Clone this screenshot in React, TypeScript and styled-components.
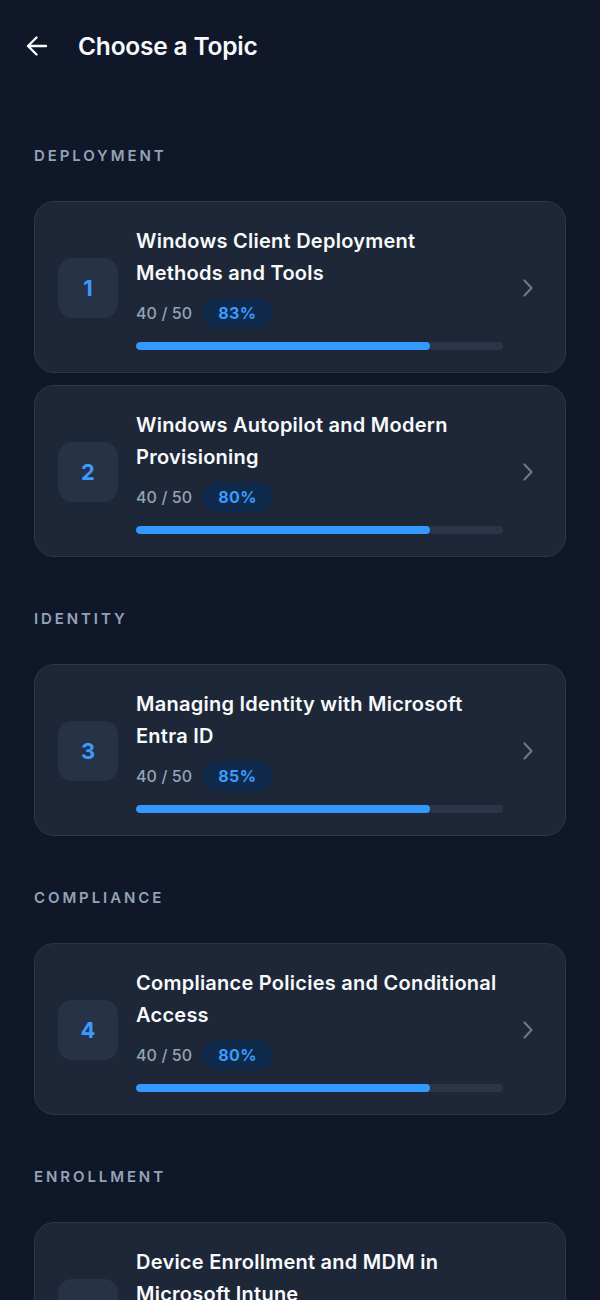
import React from "react";
import styled, { createGlobalStyle } from "styled-components";

const Global = createGlobalStyle`
  html, body { margin: 0; padding: 0; background: #0f1729; }
  body { font-family: Inter, "Noto Sans", sans-serif; -webkit-font-smoothing: antialiased; }
`;

const Page = styled.div`
  min-height: 1300px;
  background: #0f1729;
  color: #f1f5f9;
  padding: 0 34px 40px;
  box-sizing: border-box;
`;

const Header = styled.header`
  display: flex;
  align-items: center;
  gap: 28px;
  height: 48px;
  padding-top: 22px;
  margin-left: -10px;
`;

const BackButton = styled.button`
  display: flex;
  align-items: center;
  justify-content: center;
  width: 26px;
  height: 26px;
  padding: 0;
  border: none;
  background: transparent;
  color: #f8fafc;
  cursor: pointer;
`;

const Title = styled.h1`
  margin: 0;
  font-size: 24.5px;
  font-weight: 600;
  color: #f8fafc;
  letter-spacing: -0.2px;
`;

const Section = styled.section`
  display: flex;
  flex-direction: column;
  margin-top: ${(p: { $first?: boolean }) => (p.$first ? "76px" : "52px")};
`;

const SectionLabel = styled.div`
  font-size: 15px;
  line-height: 20px;
  font-weight: 600;
  letter-spacing: 2.9px;
  color: #94a3b8;
  margin-bottom: 35px;
`;

const CardList = styled.div`
  display: flex;
  flex-direction: column;
  gap: 12px;
`;

const Card = styled.div`
  display: flex;
  align-items: center;
  gap: 18px;
  padding: 23px 30px 22px 23px;
  background: #1d2738;
  border: 1px solid #2c3748;
  border-radius: 20px;
`;

const NumberBox = styled.div`
  flex: none;
  width: 60px;
  height: 60px;
  border-radius: 14px;
  background: #263246;
  display: flex;
  align-items: center;
  justify-content: center;
  color: #3b9bff;
  font-size: 22px;
  font-weight: 700;
`;

const Body = styled.div`
  flex: 1;
  min-width: 0;
  display: flex;
  flex-direction: column;
`;

const CardTitle = styled.div`
  font-size: 20px;
  line-height: 32px;
  font-weight: 600;
  letter-spacing: 0.25px;
  color: #f8fafc;
`;

const Stats = styled.div`
  display: flex;
  align-items: center;
  gap: 10px;
  margin-top: 9px;
  height: 30px;
`;

const Count = styled.span`
  font-size: 16px;
  font-weight: 500;
  letter-spacing: 0.1px;
  color: #94a3b8;
`;

const Pill = styled.span`
  display: inline-flex;
  align-items: center;
  height: 30px;
  padding: 0 16px;
  border-radius: 15px;
  background: #102a4c;
  color: #3b9bff;
  font-size: 16px;
  font-weight: 700;
  letter-spacing: 0.4px;
`;

const Track = styled.div`
  margin-top: 14px;
  height: 8px;
  border-radius: 4px;
  background: #2a3547;
  overflow: hidden;
`;

const Fill = styled.div`
  height: 100%;
  border-radius: 4px;
  background: #3399ff;
`;

const Chevron = styled.div`
  flex: none;
  width: 14px;
  display: flex;
  color: #6b7789;
`;

type Topic = { n: number; title: string; done: number; total: number; pct: number };

const sections: { label: string; topics: Topic[] }[] = [
  {
    label: "DEPLOYMENT",
    topics: [
      { n: 1, title: "Windows Client Deployment Methods and Tools", done: 40, total: 50, pct: 83 },
      { n: 2, title: "Windows Autopilot and Modern Provisioning", done: 40, total: 50, pct: 80 },
    ],
  },
  {
    label: "IDENTITY",
    topics: [{ n: 3, title: "Managing Identity with Microsoft Entra ID", done: 40, total: 50, pct: 85 }],
  },
  {
    label: "COMPLIANCE",
    topics: [{ n: 4, title: "Compliance Policies and Conditional Access", done: 40, total: 50, pct: 80 }],
  },
  {
    label: "ENROLLMENT",
    topics: [{ n: 5, title: "Device Enrollment and MDM in Microsoft Intune", done: 40, total: 50, pct: 80 }],
  },
];

const TopicCard = ({ t }: { t: Topic }) => (
  <Card>
    <NumberBox>{t.n}</NumberBox>
    <Body>
      <CardTitle>{t.title}</CardTitle>
      <Stats>
        <Count>
          {t.done} / {t.total}
        </Count>
        <Pill>{t.pct}%</Pill>
      </Stats>
      <Track>
        <Fill style={{ width: `${(t.done / t.total) * 100}%` }} />
      </Track>
    </Body>
    <Chevron>
      <svg width="14" height="20" viewBox="0 0 14 20" fill="none">
        <path d="M3.5 2.5 L10.5 10 L3.5 17.5" stroke="currentColor" strokeWidth="2.2" strokeLinecap="round" strokeLinejoin="round" />
      </svg>
    </Chevron>
  </Card>
);

export default function App() {
  return (
    <>
      <Global />
      <Page>
        <Header>
          <BackButton aria-label="Back">
            <svg width="26" height="26" viewBox="0 0 26 26" fill="none">
              <path d="M22 13 H4 M12.5 4.5 L4 13 L12.5 21.5" stroke="currentColor" strokeWidth="2.4" strokeLinecap="round" strokeLinejoin="round" />
            </svg>
          </BackButton>
          <Title>Choose a Topic</Title>
        </Header>
        {sections.map((s, i) => (
          <Section key={s.label} $first={i === 0}>
            <SectionLabel>{s.label}</SectionLabel>
            <CardList>
              {s.topics.map((t) => (
                <TopicCard key={t.n} t={t} />
              ))}
            </CardList>
          </Section>
        ))}
      </Page>
    </>
  );
}
